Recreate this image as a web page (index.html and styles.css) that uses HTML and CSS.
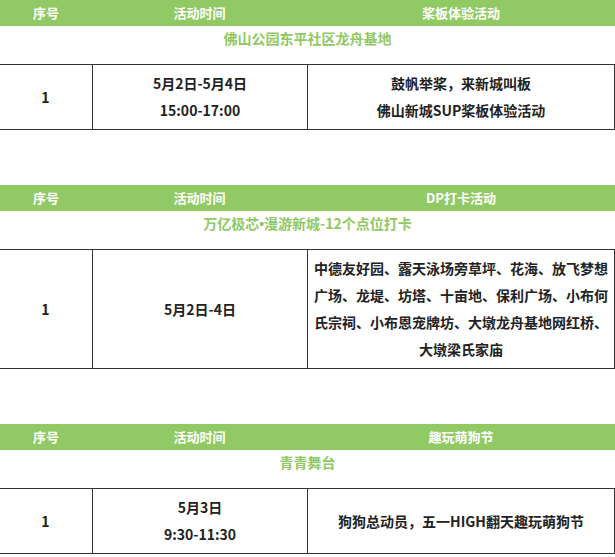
FILE: index.html
```html
<!DOCTYPE html>
<html lang="zh">
<head>
<meta charset="utf-8">
<link rel="stylesheet" href="styles.css">
</head>
<body>
<div class="page">
  <section class="block">
    <div class="head">
      <div class="hc">序号</div>
      <div class="hc">活动时间</div>
      <div class="hc">桨板体验活动</div>
    </div>
    <div class="place">佛山公园东平社区龙舟基地</div>
    <div class="row">
      <div class="cell">1</div>
      <div class="cell">5月2日-5月4日<br>15:00-17:00</div>
      <div class="cell">鼓帆举桨，来新城叫板<br>佛山新城SUP桨板体验活动</div>
    </div>
  </section>
  <section class="block">
    <div class="head">
      <div class="hc">序号</div>
      <div class="hc">活动时间</div>
      <div class="hc">DP打卡活动</div>
    </div>
    <div class="place">万亿极芯<span class="dot">•</span>漫游新城-12个点位打卡</div>
    <div class="row">
      <div class="cell">1</div>
      <div class="cell">5月2日-4日</div>
      <div class="cell">中德友好园、露天泳场旁草坪、花海、放飞梦想广场、龙堤、坊塔、十亩地、保利广场、小布何氏宗祠、小布恩宠牌坊、大墩龙舟基地网红桥、大墩梁氏家庙</div>
    </div>
  </section>
  <section class="block">
    <div class="head">
      <div class="hc">序号</div>
      <div class="hc">活动时间</div>
      <div class="hc">趣玩萌狗节</div>
    </div>
    <div class="place">青青舞台</div>
    <div class="row">
      <div class="cell">1</div>
      <div class="cell">5月3日<br>9:30-11:30</div>
      <div class="cell">狗狗总动员，五一HIGH翻天趣玩萌狗节</div>
    </div>
  </section>
</div>
</body>
</html>
```
FILE: styles.css
```css
html, body {
  margin: 0;
  padding: 0;
  background: #ffffff;
}
body {
  font-family: "Noto Sans CJK SC", "Noto Sans", sans-serif;
  color: #222222;
  width: 615px;
  overflow: hidden;
}
.page {
  display: flex;
  flex-direction: column;
  gap: 55px;
}
.block {
  display: flex;
  flex-direction: column;
}
.head {
  display: grid;
  grid-template-columns: 92px 215px 1fr;
  height: 26px;
  background: #91ca65;
  color: #ffffff;
  font-size: 13px;
  font-weight: 700;
  line-height: 26px;
}
.hc {
  text-align: center;
}
.place {
  height: 38px;
  box-sizing: border-box;
  padding-top: 0;
  line-height: 25px;
  text-align: center;
  font-size: 14px;
  font-weight: 700;
  color: #8fc864;
}
.dot {
  font-family: "Liberation Sans", sans-serif;
}
.row {
  display: grid;
  grid-template-columns: 93px 215px 1fr;
  margin-left: -1px;
  width: 615px;
  border-top: 1px solid #333333;
  border-bottom: 1px solid #333333;
  border-right: 1px solid #333333;
}
.cell {
  display: flex;
  align-items: center;
  justify-content: center;
  text-align: center;
  padding: 5px 5px;
  font-size: 14px;
  font-weight: 700;
  line-height: 27px;
}
.cell + .cell {
  border-left: 1px solid #333333;
}
```
